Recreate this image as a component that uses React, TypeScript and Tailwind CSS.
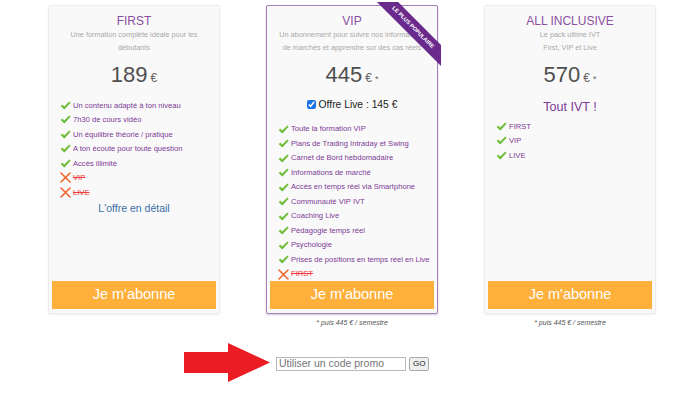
import React from "react";

const Check = () => (
  <svg width="11" height="9" viewBox="0 0 11 9" className="shrink-0">
    <defs>
      <linearGradient id="chk" x1="0" y1="0" x2="1" y2="1">
        <stop offset="0" stopColor="#8fd449" />
        <stop offset="1" stopColor="#4fa62a" />
      </linearGradient>
    </defs>
    <path d="M0.5 5 L2.5 3.6 L4.2 5.6 L9.3 0.6 L10.6 1.8 L4.3 8.6 Z" fill="url(#chk)" />
  </svg>
);

const Cross = () => (
  <svg width="11" height="11" viewBox="0 0 11 11" className="shrink-0">
    <path d="M1 1 L10 10 M10 1 L1 10" stroke="#f2662e" strokeWidth="1.6" strokeLinecap="round" />
  </svg>
);

type Feature = { label: string; ok: boolean };

const FeatureList = ({ items }: { items: Feature[] }) => (
  <ul className="px-[11px]">
    {items.map((f) => (
      <li key={f.label} className="flex items-center gap-[2px] h-[14.5px] text-[7.6px] whitespace-nowrap">
        {f.ok ? <Check /> : <Cross />}
        <span className={f.ok ? "text-[#7c3a96]" : "text-[#f2383a] line-through"}>{f.label}</span>
      </li>
    ))}
  </ul>
);

const Price = ({ value, star }: { value: string; star?: boolean }) => (
  <div className="mt-[7px] flex items-baseline justify-center h-[28px] leading-[28px] text-[#4f4f4f]">
    <span className="text-[22px]">{value}</span>
    <span className="ml-[3px] text-[12px] text-[#666]">€</span>
    {star && <span className="ml-[3px] text-[9px] text-[#666]">*</span>}
  </div>
);

const Subscribe = () => (
  <button className="mt-auto mx-[3px] mb-[4px] h-[28px] bg-[#ffb03b] text-white text-[14.5px]">
    Je m'abonne
  </button>
);

const Card = ({
  title,
  sub,
  highlight,
  children,
}: {
  title: string;
  sub: string[];
  highlight?: boolean;
  children: React.ReactNode;
}) => (
  <div
    className={
      "relative w-[172px] h-[309px] flex flex-col rounded-[2px] bg-[#f9f9f9] " +
      (highlight ? "border border-[#a57fbb] shadow-[0_1px_2px_rgba(120,70,150,0.3)]" : "border border-[#ececec] shadow-[0_1px_2px_rgba(0,0,0,0.08)]")
    }
  >
    <div className="pt-[8px] text-center text-[12px] leading-[15px] text-[#8b4fa2]">{title}</div>
    <div className="text-center text-[7.3px] leading-[12.5px] text-[#a9a9a9] whitespace-nowrap">
      {sub.map((s) => (
        <div key={s}>{s}</div>
      ))}
    </div>
    {children}
  </div>
);

export default function App() {
  return (
    <div className="w-[693px] h-[410px] bg-white overflow-hidden font-['Liberation_Sans',Arial,sans-serif]">
      <div className="flex pl-[48px] pt-[5px] gap-[46px]">
        <div className="flex flex-col">
          <Card title="FIRST" sub={["Une formation complète idéale pour les", "débutants"]}>
            <Price value="189" />
            <div className="mt-[9px]">
              <FeatureList
                items={[
                  { label: "Un contenu adapté à ton niveau", ok: true },
                  { label: "7h30 de cours vidéo", ok: true },
                  { label: "Un équilibre théorie / pratique", ok: true },
                  { label: "A ton écoute pour toute question", ok: true },
                  { label: "Accès illimité", ok: true },
                  { label: "VIP", ok: false },
                  { label: "LIVE", ok: false },
                ]}
              />
            </div>
            <div className="text-center text-[10.5px] leading-[16px] text-[#3b6ea8]">L'offre en détail</div>
            <Subscribe />
          </Card>
        </div>

        <div className="flex flex-col">
          <Card
            highlight
            title="VIP"
            sub={["Un abonnement pour suivre nos informations", "de marchés et apprendre sur des cas réels"]}
          >
            <div className="absolute z-10 right-[-4px] top-[-4px] w-[70px] h-[70px] overflow-hidden">
              <div className="absolute left-[-8px] top-[18px] w-[100px] h-[15px] rotate-45 bg-[#6a2a8c] text-white text-[5.5px] font-bold leading-[15px] text-center">
                LE PLUS POPULAIRE
              </div>
            </div>
            <Price value="445" star />
            <label className="mt-[8px] flex items-center justify-center gap-[3px] h-[16px] text-[10.3px] text-[#222]">
              <input type="checkbox" defaultChecked className="w-[9px] h-[9px] accent-[#1a73e8]" />
              Offre Live : 145 €
            </label>
            <div className="mt-[9px]">
              <FeatureList
                items={[
                  { label: "Toute la formation VIP", ok: true },
                  { label: "Plans de Trading Intraday et Swing", ok: true },
                  { label: "Carnet de Bord hebdomadaire", ok: true },
                  { label: "Informations de marché", ok: true },
                  { label: "Accès en temps réel via Smartphone", ok: true },
                  { label: "Communauté VIP IVT", ok: true },
                  { label: "Coaching Live", ok: true },
                  { label: "Pédagogie temps réel", ok: true },
                  { label: "Psychologie", ok: true },
                  { label: "Prises de positions en temps réel en Live", ok: true },
                  { label: "FIRST", ok: false },
                ]}
              />
            </div>
            <Subscribe />
          </Card>
          <div className="mt-[4px] text-center text-[7px] italic leading-[10px] text-[#555]">* puis 445 € / semestre</div>
        </div>

        <div className="flex flex-col">
          <Card title="ALL INCLUSIVE" sub={["Le pack ultime IVT", "First, VIP et Live"]}>
            <Price value="570" star />
            <div className="mt-[9px] text-center text-[12.6px] leading-[18px] text-[#7c3a96]">Tout IVT !</div>
            <div className="mt-[3px]">
              <FeatureList
                items={[
                  { label: "FIRST", ok: true },
                  { label: "VIP", ok: true },
                  { label: "LIVE", ok: true },
                ]}
              />
            </div>
            <Subscribe />
          </Card>
          <div className="mt-[4px] text-center text-[7px] italic leading-[10px] text-[#555]">* puis 445 € / semestre</div>
        </div>
      </div>

      <div className="mt-[15px] ml-[184px] flex items-center">
        <svg width="87" height="39" viewBox="0 0 87 39">
          <polygon points="0,9 44,9 44,0 86,19.5 44,39 44,30 0,30" fill="#ec1c24" />
        </svg>
        <input
          placeholder="Utiliser un code promo"
          className="ml-[5px] mt-[2px] w-[130px] h-[14px] border border-[#b9b9b9] bg-white px-[2px] text-[10.5px] placeholder:text-[#757575] outline-none"
        />
        <button className="ml-[3px] mt-[2px] h-[14px] px-[3px] border border-[#a9a9a9] rounded-[2px] bg-[#efefef] text-[8px] text-[#222] leading-[12px]">
          GO
        </button>
      </div>
    </div>
  );
}
